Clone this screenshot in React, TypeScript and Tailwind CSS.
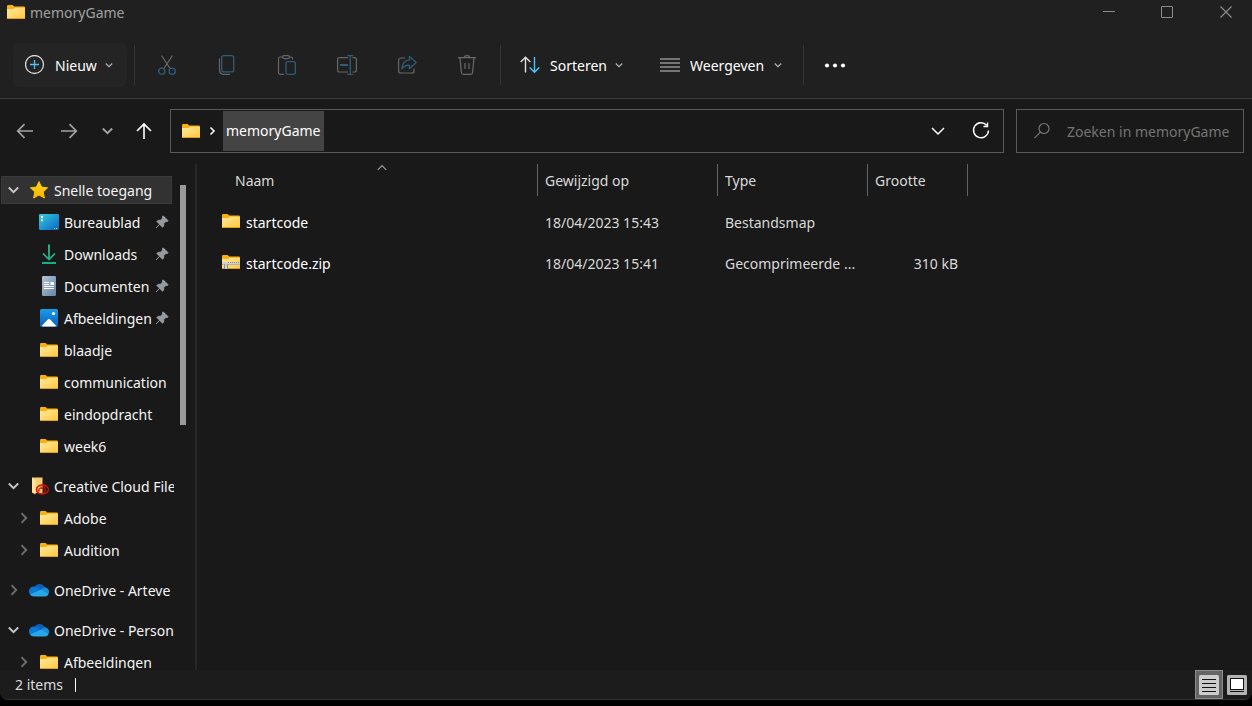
import { useState } from "react";
import type { ReactNode } from "react";

function FolderShape() {
  return (
    <>
      <path d="M0 1.2Q0 0 1.2 0H5.6L7.2 1.4H16.8Q18 1.4 18 2.6V6H0Z" fill="#f9b112" />
      <path d="M0 4H5.4Q6.4 4 7 3.4L7.6 2.8H17Q18 2.8 18 3.8V13Q18 14 17 14H1Q0 14 0 13Z" fill="url(#folderFront)" />
      <path d="M0 12.8Q0 14 1 14H17Q18 14 18 12.8V13H0Z" fill="#e3a01a" />
    </>
  );
}

function FolderIcon() {
  return (
    <svg width="18" height="14" viewBox="0 0 18 14" className="shrink-0" aria-hidden="true">
      <FolderShape />
    </svg>
  );
}

function ZipIcon() {
  return (
    <svg width="18" height="14" viewBox="0 0 18 14" className="shrink-0" aria-hidden="true">
      <FolderShape />
      <path d="M0 7H18V10H6V14H2V10H0Z" fill="#d0d0d0" />
      <path d="M6 7.500H18" stroke="#8a8a8a" strokeWidth="1" strokeDasharray="1 1" />
      <path d="M0 9.500H2M6 9.500H18" stroke="#b4b4b4" strokeWidth="1" />
      <path d="M2.500 9V14M5.500 9V14" stroke="#8f8f8f" strokeWidth="1" />
    </svg>
  );
}

function Gradients() {
  return (
    <svg width="0" height="0" className="absolute" aria-hidden="true">
      <defs>
        <linearGradient id="folderFront" x1="0" y1="0" x2="1" y2="1">
          <stop offset="0" stopColor="#ffe9a0" />
          <stop offset="1" stopColor="#ffc83a" />
        </linearGradient>
        <linearGradient id="desktopFill" x1="0" y1="0" x2="1" y2="1">
          <stop offset="0" stopColor="#36cfe0" />
          <stop offset="1" stopColor="#0a62c4" />
        </linearGradient>
        <linearGradient id="docFill" x1="0" y1="0" x2="1" y2="1">
          <stop offset="0" stopColor="#b4c4d6" />
          <stop offset="1" stopColor="#6483a6" />
        </linearGradient>
        <linearGradient id="photoFill" x1="0" y1="0" x2="0" y2="1">
          <stop offset="0" stopColor="#1a9be8" />
          <stop offset="1" stopColor="#0a5fc0" />
        </linearGradient>
        <linearGradient id="downFill" gradientUnits="userSpaceOnUse" x1="0" y1="0" x2="0" y2="20">
          <stop offset="0" stopColor="#3ccf8a" />
          <stop offset="1" stopColor="#14a58c" />
        </linearGradient>
        <linearGradient id="starFill" x1="0" y1="0" x2="0" y2="1">
          <stop offset="0" stopColor="#ffd91c" />
          <stop offset="1" stopColor="#fbb200" />
        </linearGradient>
      </defs>
    </svg>
  );
}

function Icon({ w = 20, h = 20, className = "", children }: { w?: number; h?: number; className?: string; children: ReactNode }) {
  return (
    <svg width={w} height={h} viewBox={`0 0 ${w} ${h}`} fill="none" stroke="currentColor" className={`shrink-0 ${className}`} aria-hidden="true">
      {children}
    </svg>
  );
}

const StarIcon = () => (
  <Icon>
    <path d="M10 1.6 12.6 7.1 18.6 7.8 14.2 11.9 15.4 18 10 15 4.6 18 5.8 11.9 1.4 7.8 7.4 7.1Z" fill="url(#starFill)" stroke="#fdc400" strokeWidth="1" strokeLinejoin="round" />
  </Icon>
);

const DesktopIcon = () => (
  <Icon>
    <rect x="0" y="2" width="20" height="16" rx="1.2" fill="url(#desktopFill)" stroke="none" />
    <path d="M2 4h2v2H2zM2 7.200h2v2H2z" fill="#fff" stroke="none" />
    <path d="M15 16.500h1M17 16.500h1" stroke="#d6ecff" />
  </Icon>
);

const DownloadIcon = () => (
  <Icon>
    <path d="M10 0.500V15M4 9.500 10 15.500 16 9.500" stroke="url(#downFill)" strokeWidth="1.700" />
    <path d="M3 19H17" stroke="#16b088" strokeWidth="2" />
  </Icon>
);

const DocumentIcon = () => (
  <Icon>
    <rect x="3" y="0" width="14" height="20" rx="1.200" fill="url(#docFill)" stroke="none" />
    <path d="M5 6.500H10M5 8.500H10M5 10.500H15M5 12.500H15" stroke="#fff" strokeWidth="1.200" />
    <path d="M11.500 6H15V9H11.500Z" fill="#fff" stroke="none" />
  </Icon>
);

const PhotoIcon = () => (
  <Icon>
    <rect x="1" y="1" width="18" height="18" rx="1.500" fill="url(#photoFill)" stroke="none" />
    <path d="M2.600 18 8.800 11.500Q10 10.400 11.200 11.500L17.400 18Q17 18.400 16 18.400H4Q3 18.400 2.600 18Z" fill="#fff" stroke="none" />
    <circle cx="14.500" cy="5.500" r="1.600" fill="#fff" stroke="none" />
  </Icon>
);

const CreativeCloudIcon = () => (
  <Icon>
    <path d="M3 1.500H13.500V17H5L3 16Z" fill="#f3cf72" stroke="none" />
    <path d="M3 1.500 6.500 4V18.500L3 16.500Z" fill="#ffe49a" stroke="none" />
    <ellipse cx="13.400" cy="13.500" rx="6" ry="4.600" stroke="#e0140c" strokeWidth="1.200" />
    <ellipse cx="12" cy="13.800" rx="4.300" ry="4" stroke="#e0140c" strokeWidth="1.100" />
    <path d="M9.800 15.800A2.600 2.600 0 1 1 14.400 13.500M11 14.800A1.400 1.400 0 1 1 13 13" stroke="#e0140c" strokeWidth="1" />
  </Icon>
);

const OneDriveIcon = () => (
  <Icon>
    <path d="M5.400 7.600A5.600 5.600 0 0 1 15.800 7.600L12 12 5 10Z" fill="#0f5fb8" stroke="none" />
    <path d="M5.600 6.700A4.800 4.800 0 0 0 1 14.400L12.500 11 9 7.700Q7.400 6.600 5.600 6.700Z" fill="#0a78d4" stroke="none" />
    <path d="M11.500 10.200 14.600 7.600Q16 7.100 17.200 7.700A4.200 4.200 0 0 1 19.500 13.800Z" fill="#1490df" stroke="none" />
    <path d="M1 14.200Q2.400 16.500 4.800 16.500H16Q18.800 16.500 19.700 13.800L12 9.800Z" fill="#28a8ea" stroke="none" />
  </Icon>
);

const PinIcon = () => (
  <Icon w={14} h={14} className="text-[#929ca2]">
    <path d="M8.200 0.800 13.200 5.800 12 6.600 10.800 6.500 8.800 8.600 8.600 11.200 7.500 12.200 4.700 9.400 1 13 4.600 9.300 1.800 6.500 2.800 5.400 5.400 5.200 7.500 3.200 7.400 2Z" fill="currentColor" strokeWidth="0.900" strokeLinejoin="round" />
  </Icon>
);

function Chevron({ direction, className = "" }: { direction: "down" | "right"; className?: string }) {
  return (
    <Icon w={14} h={14} className={className}>
      <path d={direction === "down" ? "M1.800 4.500 6.500 9.200 11.200 4.500" : "M4.500 2.200 9.200 7 4.500 11.800"} strokeWidth="1.900" />
    </Icon>
  );
}

const SmallChevron = () => (
  <Icon w={8} h={8} className="text-[#b4b4b4]">
    <path d="M0.800 2.500 4 5.600 7.200 2.500" strokeWidth="1.200" />
  </Icon>
);

const fileActions: { label: string; icon: ReactNode }[] = [
  {
    label: "Knippen",
    icon: (
      <>
        <path d="M4.500 0.500 12.800 13M15.500 0.500 7.200 13" stroke="#6a6a6a" strokeWidth="1.200" />
        <circle cx="4.800" cy="16.200" r="3.100" stroke="#2d5e78" strokeWidth="1.300" />
        <circle cx="15.200" cy="16.200" r="3.100" stroke="#2d5e78" strokeWidth="1.300" />
      </>
    ),
  },
  {
    label: "Kopiëren",
    icon: (
      <>
        <path d="M2.500 3.500V15Q2.500 19.300 6.800 19.300H13" stroke="#666" strokeWidth="1.200" />
        <rect x="4.700" y="0.700" width="12" height="16.200" rx="2" stroke="#2d5e78" strokeWidth="1.300" />
      </>
    ),
  },
  {
    label: "Plakken",
    icon: (
      <>
        <path d="M5.500 2H3.200Q1.500 2 1.500 3.700V17.600Q1.500 19.300 3.200 19.300H7M12.500 2H14Q15.700 2 15.700 4.500" stroke="#666" strokeWidth="1.200" />
        <rect x="5.500" y="0.600" width="7" height="3" rx="1.500" stroke="#666" strokeWidth="1.200" />
        <rect x="9" y="6.700" width="9.300" height="12.600" rx="1.500" stroke="#2d5e78" strokeWidth="1.300" />
      </>
    ),
  },
  {
    label: "Naam wijzigen",
    icon: (
      <>
        <path d="M11 2.600H2.500Q0.600 2.600 0.600 4.500V15Q0.600 17 2.500 17H11M15.500 2.600H17.500Q19.400 2.600 19.400 4.500V15Q19.400 17 17.500 17H15.500" stroke="#666" strokeWidth="1.200" />
        <path d="M3 10H11" stroke="#2d5e78" strokeWidth="2" />
        <path d="M13.300 0.700V19.300M10.300 0.700H16.300M10.300 19.300H16.300" stroke="#2d5e78" strokeWidth="1.300" />
      </>
    ),
  },
  {
    label: "Delen",
    icon: (
      <>
        <path d="M8 3H4Q1.600 3 1.600 5V16Q1.600 18 4 18H15Q17 18 17 16V13.500" stroke="#666" strokeWidth="1.200" />
        <path d="M12.500 1.500 19.300 7.500 12.500 13.500V10.300Q7.500 9.800 4.800 14Q5.300 5.500 12.500 4.800Z" stroke="#2d5e78" strokeWidth="1.300" strokeLinejoin="round" />
      </>
    ),
  },
  {
    label: "Verwijderen",
    icon: (
      <>
        <path d="M1 2.600H19M3 3 4.400 17.500Q4.600 19.300 6.400 19.300H13.600Q15.400 19.300 15.600 17.500L17 3M7.300 2.500Q7.500 0.600 10 0.600Q12.500 0.600 12.700 2.500M8 8V14M12 8V14" stroke="#6a6a6a" strokeWidth="1.200" />
      </>
    ),
  },
];

type NavEntry = {
  name: string;
  icon: ReactNode;
  level: 0 | 1;
  toggle?: "open" | "closed";
  pinned?: boolean;
  selected?: boolean;
  spaced?: boolean;
};

const navEntries: NavEntry[] = [
  { name: "Snelle toegang", icon: <StarIcon />, level: 0, toggle: "open", selected: true },
  { name: "Bureaublad", icon: <DesktopIcon />, level: 1, pinned: true },
  { name: "Downloads", icon: <DownloadIcon />, level: 1, pinned: true },
  { name: "Documenten", icon: <DocumentIcon />, level: 1, pinned: true },
  { name: "Afbeeldingen", icon: <PhotoIcon />, level: 1, pinned: true },
  { name: "blaadje", icon: <FolderIcon />, level: 1 },
  { name: "communication", icon: <FolderIcon />, level: 1 },
  { name: "eindopdracht", icon: <FolderIcon />, level: 1 },
  { name: "week6", icon: <FolderIcon />, level: 1 },
  { name: "Creative Cloud File", icon: <CreativeCloudIcon />, level: 0, toggle: "open", spaced: true },
  { name: "Adobe", icon: <FolderIcon />, level: 1, toggle: "closed" },
  { name: "Audition", icon: <FolderIcon />, level: 1, toggle: "closed" },
  { name: "OneDrive - Arteve", icon: <OneDriveIcon />, level: 0, toggle: "closed", spaced: true },
  { name: "OneDrive - Person", icon: <OneDriveIcon />, level: 0, toggle: "open", spaced: true },
  { name: "Afbeeldingen", icon: <FolderIcon />, level: 1, toggle: "closed" },
];

function NavRow({ entry }: { entry: NavEntry }) {
  return (
    <li className={`flex h-8 items-center ${entry.spaced ? "mt-2" : ""}`}>
      <div
        className={`ml-px flex h-7 w-[171px] items-center border ${entry.level === 1 ? "pl-[15px]" : "pl-[5px]"} ${
          entry.selected ? "border-[#3a3a3a] bg-[#323232]" : "border-transparent"
        }`}
      >
        <div className="flex w-[22px] shrink-0 items-center">
          {entry.toggle && (
            <button type="button" aria-label={`${entry.name} in- of uitklappen`} aria-expanded={entry.toggle === "open"}>
              <Chevron
                direction={entry.toggle === "open" ? "down" : "right"}
                className={entry.toggle === "open" ? "text-[#c8c8c8]" : "text-[#6e6e6e]"}
              />
            </button>
          )}
        </div>
        <a href="#" className="flex min-w-0 flex-1 items-center gap-[5px]">
          <span className="flex w-5 shrink-0 justify-center">{entry.icon}</span>
          <span className="min-w-0 flex-1 pt-0.5 whitespace-nowrap">{entry.name}</span>
        </a>
        {entry.pinned && (
          <span className="mr-0.5 shrink-0">
            <PinIcon />
          </span>
        )}
      </div>
    </li>
  );
}

const files = [
  { name: "startcode", icon: <FolderIcon />, modified: "18/04/2023 15:43", type: "Bestandsmap", size: "" },
  { name: "startcode.zip", icon: <ZipIcon />, modified: "18/04/2023 15:41", type: "Gecomprimeerde ...", size: "310 kB" },
];

function HeaderCell({ label, sorted = false }: { label: string; sorted?: boolean }) {
  return (
    <th scope="col" className="p-0 pb-1.5 text-left font-normal">
      <button
        type="button"
        className={`relative flex h-8 w-full items-center border-r border-[#636363] pt-0.5 ${sorted ? "pl-[38px]" : "pl-[7px]"}`}
      >
        {label}
        {sorted && (
          <span className="absolute top-0 left-[180px]">
            <Icon w={10} h={8} className="text-[#9a9a9a]">
              <path d="M0.800 5.800 5 1.600 9.200 5.800" strokeWidth="1.200" />
            </Icon>
          </span>
        )}
      </button>
    </th>
  );
}

function TitleBar() {
  return (
    <header className="flex h-8 items-start justify-between">
      <div className="flex h-6 items-center gap-[5px] pl-[7px] text-[#a0a0a0]">
        <FolderIcon />
        <h1 className="pt-0.5">memoryGame</h1>
      </div>
      <div className="flex h-6 text-[#8c8c8c]">
        <button type="button" aria-label="Minimaliseren" className="flex w-[58px] items-center justify-center">
          <Icon w={12} h={12}><path d="M0 5.500H12" /></Icon>
        </button>
        <button type="button" aria-label="Maximaliseren" className="flex w-[58px] items-center justify-center">
          <Icon w={12} h={12}><rect x="0.500" y="0.500" width="11" height="11" rx="0.500" /></Icon>
        </button>
        <button type="button" aria-label="Sluiten" className="flex w-[56px] items-center justify-center pl-1">
          <Icon w={12} h={12}><path d="M0.500 0.500 11.500 11.500M11.500 0.500 0.500 11.500" strokeWidth="1.200" /></Icon>
        </button>
      </div>
    </header>
  );
}

const Divider = () => <div className="h-10 w-px shrink-0 bg-[#343434]" />;

function Toolbar() {
  return (
    <div className="flex h-[67px] items-center border-b border-[#3c3c3c] pl-[13px] text-white">
      <button type="button" className="mr-[7px] flex h-11 w-[114px] items-center rounded-md bg-[#242424] pl-3">
        <Icon>
          <circle cx="9.500" cy="9.500" r="9" stroke="#d8d8d8" strokeWidth="1.300" />
          <path d="M9.500 5V14M5 9.500H14" stroke="#4cc2ff" strokeWidth="1.300" />
        </Icon>
        <span className="mr-2 ml-2.5 pt-0.5">Nieuw</span>
        <SmallChevron />
      </button>
      <Divider />
      <div className="flex w-[365px] pl-0.5">
        {fileActions.map((action) => (
          <button key={action.label} type="button" aria-label={action.label} className="flex h-11 w-[60px] items-center justify-center">
            <Icon>{action.icon}</Icon>
          </button>
        ))}
      </div>
      <Divider />
      <button type="button" className="ml-[19px] flex h-11 w-[140px] items-center">
        <Icon>
          <path d="M5.500 2V17.500M0.700 7 5.500 2.200 10.300 7" stroke="#e0e0e0" strokeWidth="1.400" />
          <path d="M14.500 2V17.500M9.700 12.500 14.500 17.300 19.300 12.500" stroke="#4cc2ff" strokeWidth="1.400" />
        </Icon>
        <span className="mr-2 ml-2.5 pt-0.5">Sorteren</span>
        <SmallChevron />
      </button>
      <button type="button" className="mr-[21px] flex h-11 items-center">
        <Icon>
          <path d="M0 4H20M0 8H20M0 12H20M0 16H20" stroke="#c8c8c8" strokeWidth="1.200" />
        </Icon>
        <span className="mr-2.5 ml-2.5 pt-0.5">Weergeven</span>
        <SmallChevron />
      </button>
      <Divider />
      <button type="button" aria-label="Meer weergeven" className="ml-[20px] flex h-11 items-center">
        <Icon w={22}>
          <circle cx="3" cy="10.500" r="2.100" fill="#fff" stroke="none" />
          <circle cx="11" cy="10.500" r="2.100" fill="#fff" stroke="none" />
          <circle cx="19" cy="10.500" r="2.100" fill="#fff" stroke="none" />
        </Icon>
      </button>
    </div>
  );
}

function AddressRow() {
  return (
    <div className="flex items-center gap-3 px-2 pt-2.5 pb-[11px]">
      <div className="flex w-[150px] shrink-0 items-center text-[#a2a2a2]">
        <button type="button" aria-label="Vorige" className="flex w-[34px] justify-center">
          <Icon><path d="M18 10H3M9.500 3.200 2.700 10 9.500 16.800" strokeWidth="1.700" /></Icon>
        </button>
        <button type="button" aria-label="Volgende" className="ml-[10px] flex w-[34px] justify-center">
          <Icon><path d="M2 10H17M10.500 3.200 17.300 10 10.500 16.800" strokeWidth="1.700" /></Icon>
        </button>
        <button type="button" aria-label="Recente locaties" className="flex w-[43px] justify-center">
          <Chevron direction="down" />
        </button>
        <button type="button" aria-label="Omhoog" className="flex w-[29px] justify-center text-white">
          <Icon><path d="M10 18V3M3 10 10 3 17 10" strokeWidth="1.600" /></Icon>
        </button>
      </div>
      <div className="flex h-11 min-w-0 flex-1 items-center border border-[#5a5a5a] pl-[11px] text-white">
        <FolderIcon />
        <span className="mr-1 ml-[5px]">
          <Icon w={14} h={14}><path d="M5.500 3.500 9 7 5.500 10.500" strokeWidth="1.600" /></Icon>
        </span>
        <button type="button" className="h-10 bg-[#444444] px-[3px]">memoryGame</button>
        <div className="flex-1" />
        <button type="button" aria-label="Vorige locaties" className="flex w-[42px] justify-center">
          <Icon w={14} h={14}><path d="M1 4 7 10 13 4" strokeWidth="1.500" /></Icon>
        </button>
        <button type="button" aria-label="Vernieuwen" className="flex w-11 justify-center">
          <Icon>
            <path d="M15.600 4.200A7.500 7.500 0 1 0 17.500 9.500M16.500 1.500V5.500H12.500" strokeWidth="1.400" />
          </Icon>
        </button>
      </div>
      <label className="flex h-11 w-[228px] shrink-0 items-center gap-4 border border-[#5a5a5a] pl-4">
        <Icon w={18} h={18} className="text-[#777777]">
          <circle cx="11" cy="6.500" r="5" strokeWidth="1.200" />
          <path d="M7.400 10.200 1.500 16.200" strokeWidth="1.200" />
        </Icon>
        <input type="search" aria-label="Zoeken in memoryGame" placeholder="Zoeken in memoryGame" className="min-w-0 flex-1 bg-transparent pt-0.5 text-white outline-none placeholder:text-[#747474]" />
      </label>
    </div>
  );
}

export default function App() {
  const [view, setView] = useState("details");
  return (
    <div className="h-screen bg-black pb-1.5 font-['Segoe_UI','Noto_Sans',sans-serif] text-[14px] leading-5">
      <Gradients />
      <div className="flex h-full flex-col overflow-hidden rounded-b-lg border-b border-[#333333] bg-[#191919]">
        <div className="bg-[#202020]">
          <TitleBar />
          <Toolbar />
        </div>
        <AddressRow />
        <div className="flex min-h-0 flex-1">
          <nav aria-label="Navigatie" className="flex w-[197px] shrink-0 border-r-2 border-[#272727] text-[#f4f4f4]">
            <ul className="w-[174px] overflow-hidden pt-2.5">
              {navEntries.map((entry, index) => (
                <NavRow key={index} entry={entry} />
              ))}
            </ul>
            <div className="ml-1.5 pt-[21px]">
              <div className="h-60 w-1.5 bg-[#9a9a9a]" />
            </div>
          </nav>
          <main className="min-w-0 flex-1 overflow-hidden">
            <table className="w-[771px] table-fixed border-collapse text-[#d8d8d8]">
              <colgroup>
                <col className="w-[341px]" />
                <col className="w-[180px]" />
                <col className="w-[150px]" />
                <col className="w-[100px]" />
              </colgroup>
              <thead>
                <tr>
                  <HeaderCell label="Naam" sorted />
                  <HeaderCell label="Gewijzigd op" />
                  <HeaderCell label="Type" />
                  <HeaderCell label="Grootte" />
                </tr>
              </thead>
              <tbody>
                {files.map((file) => (
                  <tr key={file.name} className="h-[41px]">
                    <td className="p-0 pl-[25px]">
                      <a href="#" className="flex items-center gap-1.5 text-white">
                        <span className="pb-[3px]">{file.icon}</span>
                        {file.name}
                      </a>
                    </td>
                    <td className="p-0 pl-[7px]">{file.modified}</td>
                    <td className="p-0 pl-[7px] whitespace-nowrap">{file.type}</td>
                    <td className="p-0 pr-2.5 text-right">{file.size}</td>
                  </tr>
                ))}
              </tbody>
            </table>
          </main>
        </div>
        <footer className="flex h-[29px] shrink-0 items-center bg-[#1c1c1c] pl-[15px] text-[#dcdcdc]">
          <span>2 items</span>
          <span className="ml-3 h-3.5 w-px bg-white" />
          <div className="ml-auto flex items-center pr-px">
            <button
              type="button"
              aria-label="Details"
              aria-pressed={view === "details"}
              onClick={() => setView("details")}
              className={`flex h-[29px] w-7 items-center justify-center border ${view === "details" ? "border-[#8c8c8c] bg-[#646464]" : "border-transparent"}`}
            >
              <Icon>
                <rect width="20" height="20" rx="1.500" fill="#cccccc" stroke="none" />
                <path d="M3 4.500H17M3 8.500H17M3 12.500H17M3 16.500H17" stroke="#111" />
              </Icon>
            </button>
            <button
              type="button"
              aria-label="Grote pictogrammen"
              aria-pressed={view === "large"}
              onClick={() => setView("large")}
              className={`flex h-[29px] w-7 items-center justify-center border ${view === "large" ? "border-[#8c8c8c] bg-[#646464]" : "border-transparent"}`}
            >
              <Icon>
                <rect width="20" height="20" rx="1.500" fill="#b4b4b4" stroke="none" />
                <rect x="3.500" y="3.500" width="13" height="11" fill="#fff" stroke="#111" />
                <path d="M3 16.500H17" stroke="#111" />
              </Icon>
            </button>
          </div>
        </footer>
      </div>
    </div>
  );
}
